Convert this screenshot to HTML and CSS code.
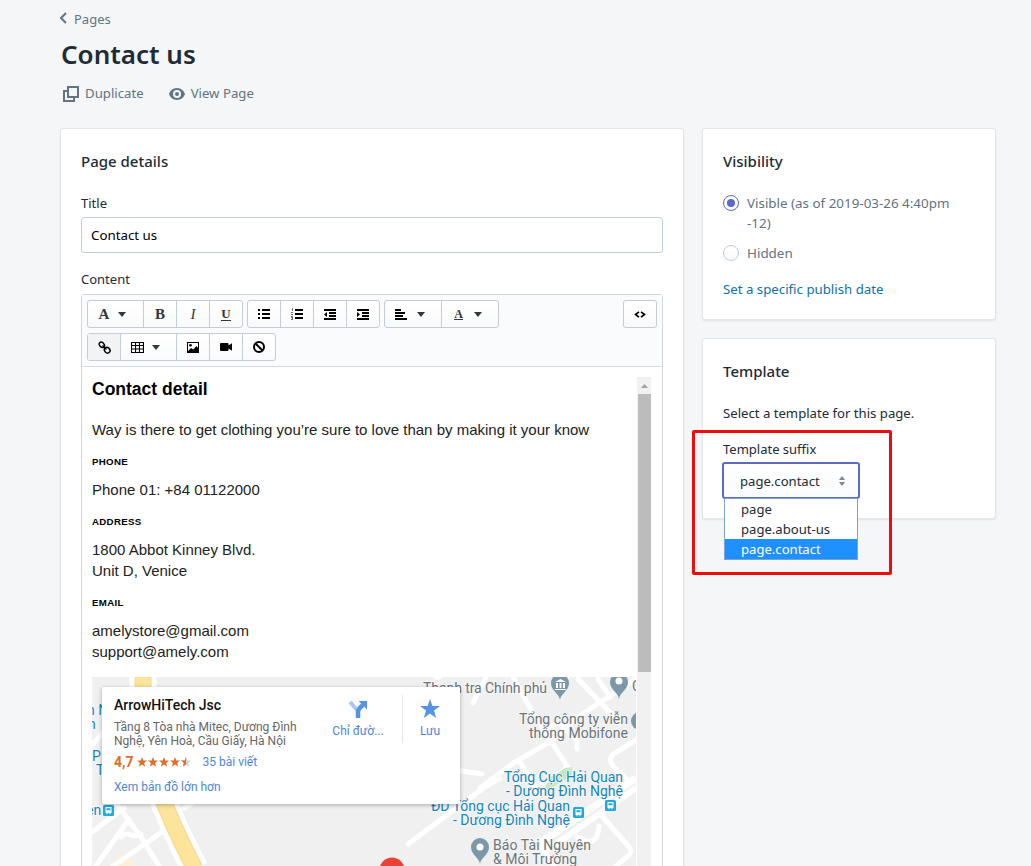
FILE: index.html
```html
<!DOCTYPE html>
<html lang="en">
<head>
<meta charset="utf-8">
<title>Contact us</title>
<link rel="stylesheet" href="styles.css">
</head>
<body>
<header class="header">
  <a class="back"><svg width="8" height="12" viewBox="0 0 8 12"><path d="M7 1 2 6l5 5" fill="none" stroke="#637381" stroke-width="2"/></svg><span>Pages</span></a>
  <h1 class="title">Contact us</h1>
  <div class="actions">
    <a class="action"><svg width="18" height="18" viewBox="0 0 18 18" fill="none" stroke="#637381" stroke-width="2"><path d="M6 2h10v10H6z"/><path d="M5 6H2v10h10v-3"/></svg><span>Duplicate</span></a>
    <a class="action view"><svg width="16" height="12" viewBox="0 0 16 12"><path fill="#637381" fill-rule="evenodd" d="M8 0c4 0 7 3 8 6-1 3-4 6-8 6S1 9 0 6c1-3 4-6 8-6zm0 2a4 4 0 1 0 0 8 4 4 0 0 0 0-8zm0 2a2 2 0 1 1 0 4 2 2 0 0 1 0-4z"/></svg><span>View Page</span></a>
  </div>
</header>
<main class="layout">
  <section class="card details">
    <h2 class="card-title">Page details</h2>
    <label class="label">Title</label>
    <div class="input">Contact us</div>
    <label class="label content-label">Content</label>
    <div class="editor">
      <div class="toolbar">
        <div class="tool-row">
          <div class="group">
            <span class="btn wide"><b class="glyph">A</b><i class="caret"></i></span>
            <span class="btn"><b class="glyph">B</b></span>
            <span class="btn"><em class="glyph">I</em></span>
            <span class="btn"><b class="glyph under">U</b></span>
          </div>
          <div class="group">
            <span class="btn"><svg width="12" height="10" viewBox="0 0 12 10"><path d="M0 0h2v2H0zM0 4h2v2H0zM0 8h2v2H0zM4 0h8v2H4zM4 4h8v2H4zM4 8h8v2H4z"/></svg></span>
            <span class="btn"><svg width="12" height="12" viewBox="0 0 12 12"><path d="M4 1h8v2H4zM4 5h8v2H4zM4 9h8v2H4z"/><path d="M1 0h1v3H1zM0 4h2v1H1v1h1v1H0V6h1V5H0zM0 8h2v4H0v-1h1v-1H0z" opacity=".55"/></svg></span>
            <span class="btn"><svg width="12" height="11" viewBox="0 0 12 11"><path d="M0 0h12v2H0zM5 3h7v2H5zM5 6h7v2H5zM0 9h12v2H0zM3 3v5L0 5.500z"/></svg></span>
            <span class="btn"><svg width="12" height="11" viewBox="0 0 12 11"><path d="M0 0h12v2H0zM5 3h7v2H5zM5 6h7v2H5zM0 9h12v2H0zM0 3v5l3-2.500z"/></svg></span>
          </div>
          <div class="group">
            <span class="btn menu"><svg width="12" height="11" viewBox="0 0 12 11"><path d="M0 0h6v2H0zM0 3h10v2H0zM0 6h8v2H0zM0 9h12v2H0z"/></svg><i class="caret"></i></span>
            <span class="btn menu color"><b class="glyph small under">A</b><i class="caret"></i></span>
          </div>
          <div class="group code"><span class="btn"><svg width="12" height="7" viewBox="0 0 12 7"><path d="M5 .8 1.500 3.500 5 6.200M7 .8l3.500 2.700L7 6.200" fill="none" stroke="#000" stroke-width="1.700"/></svg></span></div>
        </div>
        <div class="tool-row">
          <div class="group">
            <span class="btn pressed"><svg width="13" height="13" viewBox="0 0 13 13" fill="none" stroke="#000" stroke-width="1.500"><ellipse cx="3.800" cy="3.800" rx="3" ry="2.200" transform="rotate(45 3.800 3.800)"/><ellipse cx="9.200" cy="9.200" rx="3" ry="2.600" transform="rotate(45 9.200 9.200)"/><path d="m4.500 4.500 4 4"/></svg></span>
            <span class="btn wide grid"><svg width="13" height="11" viewBox="0 0 12 11" preserveAspectRatio="none"><path fill-rule="evenodd" d="M0 0h12v11H0zM1 1v2h2.700V1zm3.700 0v2h2.600V1zm3.600 0v2H11V1zM1 4v2.500h2.700V4zm3.700 0v2.500h2.600V4zm3.600 0v2.500H11V4zM1 7.500V10h2.700V7.500zm3.700 0V10h2.600V7.500zm3.600 0V10H11V7.500z"/></svg><i class="caret"></i></span>
            <span class="btn"><svg width="12" height="11" viewBox="0 0 12 11"><path fill-rule="evenodd" d="M0 0h12v11H0zM1 1v8l3-3 2 1.500L9.500 4 11 6V1z"/><circle cx="3.500" cy="3.300" r="1.300"/></svg></span>
            <span class="btn"><svg width="12" height="8" viewBox="0 0 12 8"><path d="M1 0h6.500a1 1 0 0 1 1 1v1.500L12 .3v7.400L8.500 5.500V7a1 1 0 0 1-1 1H1a1 1 0 0 1-1-1V1a1 1 0 0 1 1-1z"/></svg></span>
            <span class="btn"><svg width="12" height="12" viewBox="0 0 12 12" fill="none" stroke="#000" stroke-width="2"><circle cx="6" cy="6" r="5"/><path d="m2.500 2.500 7 7"/></svg></span>
          </div>
        </div>
      </div>
      <div class="frame">
        <article class="doc">
          <h3>Contact detail</h3>
          <p class="intro">Way is there to get clothing you’re sure to love than by making it your know</p>
          <h6>PHONE</h6>
          <p>Phone 01: +84 01122000</p>
          <h6>ADDRESS</h6>
          <p>1800 Abbot Kinney Blvd.<br>Unit D, Venice</p>
          <h6>EMAIL</h6>
          <p>amelystore@gmail.com<br>support@amely.com</p>
          <div class="map">
            <svg class="map-canvas" width="544" height="189" viewBox="92 677 544 189">
              <defs>
                <g id="pin"><path d="M0 15C-1 8-9 6-9-2a9 9 0 0 1 18 0C9 6 1 8 0 15z" fill="#7b98a8"/></g>
                <g id="stop"><rect x="-5.500" y="-5.500" width="11" height="11" rx="1.500" fill="#1da9e8"/><path fill="#fff" fill-rule="evenodd" d="M-3-3.500h6v6H2v1.300H1V2.500h-2v1.300h-1V2.500h-1zM-2-2.300v2h4v-2z"/></g>
              </defs>
              <rect x="92" y="677" width="544" height="189" fill="#f0f0f0"/>
              <path d="M110 866l10-13 14 9v4z" fill="#fdf0d5"/>
              <g fill="none" stroke="#fff" stroke-width="5" stroke-linecap="round" stroke-linejoin="round">
                <path d="M92 832 124 808M116 803l25 34 18 29M96 866l33-47M113 866l49-34M121 837c8-8 10 3 20-3M184 808l10-6M92 745l12-14"/>
                <path d="M486 677l-13 26M436 677h3M455 770l27 4M408 844l77-57 15-9M480 788l32-24 41-24 23-22 60-39M513 677l20 36 36 56M520 762l20 32M532 791l36-24M578 679l42 44M548 727l11-4 18 18v8M636 740l-21 13q-8 5-2 13l15 14M598 679l12 18M567 677l-10 8M538 840l16 26M577 837l12 5q9-1 10-16M602 816l27 31q4 5-1 9l-12 10"/>
              </g>
              <path d="M545 787l6-10 14-9 7-1v8l-24 15z" fill="#c5e8c0"/>
              <path d="M540 843 636 778" stroke="#fff" stroke-width="7"/>
              <path d="M543 853 636 788" stroke="#fff" stroke-width="6"/>
              <path d="M143 677v34M158 787q14 38 37 82" fill="none" stroke="#fff" stroke-width="27"/>
              <path d="M143 677v34M158 787q14 38 37 82" fill="none" stroke="#f5d98d" stroke-width="17"/>
              <path d="M143 677v34M158 787q14 38 37 82" fill="none" stroke="#fde49b" stroke-width="15"/>
              <use href="#pin" x="560" y="685"/><path d="M555 682l5.500-3 5.500 3zm1 1h2v5h-2zm3.500 0h2v5h-2zm3.500 0h2v5h-2zm-8 6h11v1h-11z" fill="#fff"/>
              <use href="#pin" x="619" y="684"/><circle cx="619" cy="681" r="3.500" fill="#fff"/>
              <circle cx="640" cy="721" r="9" fill="#7b98a8"/>
              <use href="#pin" x="480" y="849"/><circle cx="480" cy="847" r="3.500" fill="#fff"/>
              <use href="#stop" x="108.500" y="810.500"/><use href="#stop" x="578.500" y="812.500"/><use href="#stop" x="610.500" y="805.500"/>
              <circle cx="392" cy="870" r="12.500" fill="#ea4335"/>
              <g class="place">
                <text x="423" y="693" textLength="124">Thanh tra Chính phủ</text>
                <text x="632" y="691">C</text>
                <text x="519" y="724" textLength="109">Tổng công ty viễn</text>
                <text x="529" y="738" textLength="99">thông Mobifone</text>
                <text x="493" y="850" textLength="98">Báo Tài Nguyên</text>
                <text x="493" y="864" textLength="84">&amp; Môi Trường</text>
              </g>
              <g class="place transit">
                <text x="504" y="782" textLength="119">Tổng Cục Hải Quan</text>
                <text x="506" y="796" textLength="117">- Dương Đình Nghệ</text>
                <text x="431" y="811" textLength="139">ĐD Tổng cục Hải Quan</text>
                <text x="453" y="825" textLength="117">- Dương Đình Nghệ</text>
                <text x="87" y="715">n N</text><text x="88" y="729">n</text>
                <text x="92" y="761">P</text><text x="96" y="775">T</text><text x="86" y="815">ện</text>
              </g>
            </svg>
            <div class="place-card">
              <div class="place-info">
                <div class="place-name">ArrowHiTech Jsc</div>
                <div class="place-address">Tầng 8 Tòa nhà Mitec, Dương Đình<br>Nghệ, Yên Hoà, Cầu Giấy, Hà Nội</div>
                <div class="rating"><b>4,7</b>
                  <svg width="55" height="10" viewBox="0 0 55 10"><defs><path id="star" d="m5 0 1.300 3.600H10L7.100 5.900 8.200 9.800 5 7.500 1.800 9.800 2.900 5.900 0 3.600h3.700z"/><clipPath id="half"><path d="M44 0h5v10h-5z"/></clipPath></defs><g fill="#dd6f29"><use href="#star"/><use href="#star" x="11"/><use href="#star" x="22"/><use href="#star" x="33"/></g><use href="#star" x="44" fill="#d0d0d0"/><g clip-path="url(#half)" fill="#dd6f29"><use href="#star" x="44"/></g></svg>
                  <a>35 bài viết</a></div>
                <a class="larger">Xem bản đồ lớn hơn</a>
              </div>
              <div class="place-action"><svg width="20" height="20" viewBox="0 0 20 20"><path d="M2 3l7 8" stroke="#a9c8f1" stroke-width="4"/><path d="M10 19v-6q0-3 5-7" fill="none" stroke="#5594e2" stroke-width="4.500"/><path d="M10.500 2H19v8.500z" fill="#5594e2"/></svg><span>Chỉ đườ...</span></div>
              <div class="place-action save"><svg width="20" height="20" viewBox="0 0 20 20"><path d="m10 0 2.400 7H20l-6 4.500 2.200 7.500L10 14.500 3.800 19 6 11.500 0 7h7.600z" fill="#5594e2"/></svg><span>Lưu</span></div>
            </div>
          </div>
        </article>
        <div class="scrollbar"><span class="scroll-up"><svg width="7" height="4" viewBox="0 0 7 4"><path d="M0 4 3.500 0 7 4z" fill="#a3a3a3"/></svg></span><span class="thumb"></span></div>
      </div>
    </div>
  </section>
  <aside class="side">
    <section class="card visibility">
      <h2 class="card-title">Visibility</h2>
      <div class="choice"><span class="radio on"></span><span>Visible (as of 2019-03-26 4:40pm<br>-12)</span></div>
      <div class="choice"><span class="radio"></span><span>Hidden</span></div>
      <a class="link">Set a specific publish date</a>
    </section>
    <section class="card template">
      <h2 class="card-title">Template</h2>
      <p class="hint">Select a template for this page.</p>
      <label class="label">Template suffix</label>
      <div class="select"><span>page.contact</span><svg width="6" height="10" viewBox="0 0 6 10"><path d="M3 0l3 4H0zM3 10 0 6h6z" fill="#7c8792"/></svg>
        <ul class="options"><li>page</li><li>page.about-us</li><li class="chosen">page.contact</li></ul>
      </div>
      <div class="highlight"></div>
    </section>
  </aside>
</main>
</body>
</html>
```
FILE: styles.css
```css
* { box-sizing: border-box; }
html, body { height: 866px; overflow: hidden; }
body { margin: 0; padding: 0 35px 0 60px; background: #f4f6f8; color: #212b36; font: 13.200px/20px "Noto Sans", "Open Sans", sans-serif; }
h1, h2, h3, h6, p, ul { margin: 0; padding: 0; }
svg { display: block; flex: none; }

.header { height: 128px; padding-top: 9px; color: #637381; }
.back { display: flex; align-items: center; gap: 7px; height: 20px; font-size: 13px; }
.back svg { margin: -3px 0 0 -1px; }
.title { margin-top: 9px; padding-left: 1px; font-size: 26px; line-height: 32px; font-weight: 600; color: #212b36; }
.actions { display: flex; gap: 25px; margin-top: 13px; padding-left: 2px; font-size: 13.200px; }
.action { display: flex; align-items: center; gap: 5px; height: 20px; }
.action svg { margin-top: 1px; }
.view { gap: 6px; }

.layout { display: flex; align-items: flex-start; gap: 19px; }
.card { background: #fff; border: 1px solid #e1e6ea; border-radius: 3px; box-shadow: 0 1px 2px rgba(63, 63, 68, .1); }
.details { width: 624px; height: 760px; padding: 21px 20px; }
.card-title { margin-bottom: 21px; font-size: 15px; line-height: 22px; font-weight: 500; }
.label { display: block; height: 20px; font-size: 13px; }
.input { height: 36px; margin-top: 4px; padding: 7px 9px; border: 1px solid #c4cdd5; border-radius: 3px; color: #000; font-size: 13.300px; }
.content-label { margin-top: 16px; }

.editor { margin-top: 5px; height: 600px; border: 1px solid #cfd7dc; border-radius: 3px; }
.toolbar { display: flex; flex-direction: column; gap: 5px; height: 72px; padding: 5px; background: #f9fbfc; border-bottom: 1px solid #d1dadf; }
.tool-row { display: flex; gap: 4px; }
.group { display: flex; height: 28px; border: 1px solid #c4cdd5; border-radius: 3px; background: linear-gradient(#fff, #f9fafb); }
.code { margin-left: auto; }
.btn { display: flex; align-items: center; justify-content: center; width: 33px; border-right: 1px solid #c4cdd5; }
.btn:last-child { width: 32px; border-right: 0; }
.wide { width: 56px; gap: 9px; padding-right: 6px; }
.grid { gap: 8px; padding-right: 7px; }
.menu { width: 57px; gap: 10px; padding-right: 7px; }
.color:last-child { width: 56px; gap: 11px; padding-right: 4px; }
.pressed { background: #f1f3f5; }
.glyph { font-family: "Liberation Serif", serif; font-size: 15px; line-height: 16px; color: #33373b; }
.under { line-height: 12px; font-size: 13px; border-bottom: 1px solid #33373b; }
.small { font-size: 12px; line-height: 10px; }
.caret { border: 4.500px solid transparent; border-top: 5px solid #33373b; border-bottom: 0; }

.frame { display: flex; padding: 10px 11px 0 10px; }
.doc { width: 544px; margin-right: 1px; color: #000; font: 15px/21px "Liberation Sans", Arial, sans-serif; }
.doc h3 { font-size: 17.500px; line-height: 24px; }
.doc .intro { margin: 18px 0 0; white-space: nowrap; }
.doc h6 { margin-top: 15px; font-size: 9.700px; line-height: 14px; letter-spacing: .3px; }
.doc p { margin-top: 10px; color: #222; }
.map { position: relative; width: 544px; margin-top: 15px; font-family: Roboto, sans-serif; }
.place { font: 14px Roboto, sans-serif; fill: #68747b; stroke: #f8f8f8; stroke-width: 1.500px; paint-order: stroke; }
.transit { fill: #1385bd; }
.place-card { position: absolute; left: 10px; top: 10px; display: flex; width: 358px; height: 117px; padding: 8px 0 0 12px; background: #fff; border-radius: 2px; box-shadow: 0 1px 4px rgba(0, 0, 0, .3); font-size: 12px; line-height: 14px; }
.place-info { width: 210px; color: #666; }
.place-name { font-size: 14px; line-height: 20px; font-weight: 500; color: #111; }
.place-address { margin-top: 5px; white-space: nowrap; }
.rating { display: flex; align-items: center; gap: 3px; margin-top: 6px; height: 16px; white-space: nowrap; }
.rating b { color: #dd6f29; font-size: 14px; font-weight: 700; }
.rating svg { margin-top: -1px; }
.rating a { margin-left: 8px; }
.rating a, .larger, .place-action { color: #4d86d9; }
.larger { display: block; margin-top: 10px; }
.place-action { display: flex; flex-direction: column; align-items: center; gap: 5px; width: 68px; height: 48px; padding-top: 4px; }
.save { width: 55px; margin-left: 10px; border-left: 1px solid #e8e8e8; }
.scrollbar { display: flex; flex-direction: column; width: 15px; height: 500px; background: #f1f1f1; align-items: center; }
.scroll-up { display: flex; align-items: center; justify-content: center; height: 17px; }
.thumb { width: 13px; height: 278px; background: #bcbcbc; }

.side { display: flex; flex-direction: column; gap: 18px; width: 294px; margin-left: -1px; }
.side .card { padding: 21px 20px; }
.visibility { height: 192px; }
.choice { display: flex; gap: 8px; margin-bottom: 10px; color: #637381; font-size: 13.400px; white-space: nowrap; }
.radio { display: flex; align-items: center; justify-content: center; flex: none; width: 16px; height: 16px; margin-top: 2px; border: 1px solid #c4cdd5; border-radius: 50%; background: linear-gradient(#fff, #f9fafb); }
.on { border-color: #5c6ac4; }
.on::after { content: ""; width: 8px; height: 8px; border-radius: 50%; background: #5c6ac4; }
.link { display: block; margin-top: 16px; color: #1070ad; font-size: 13.250px; }
.template { position: relative; height: 181px; }
.hint { font-size: 13.150px; }
.template .label { margin-top: 16px; }
.select { position: relative; display: flex; align-items: center; justify-content: space-between; width: 138px; height: 37px; margin: 3px 0 0 -1px; padding: 0 13px 0 16px; border: 2px solid #5c6ac4; border-radius: 3px; background: linear-gradient(#fff, #f9fafb); font-size: 13.100px; }
.options { position: absolute; left: 0; top: 34px; width: 134px; height: 62px; list-style: none; background: #fff; border: 1px solid #7da2ce; }
.options li { height: 20px; padding-left: 16px; line-height: 21px; font-size: 13.100px; }
.options .chosen { background: #1e90ff; color: #fff; }
.highlight { position: absolute; left: -11px; top: 91px; width: 200px; height: 145px; border: 3px solid #ed0b0b; border-radius: 2px; }
```
